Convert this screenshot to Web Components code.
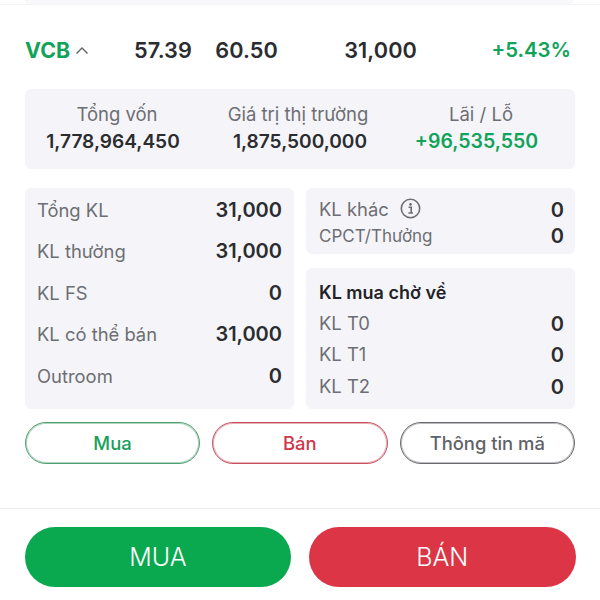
<!DOCTYPE html>
<html lang="vi"><head><meta charset="utf-8">
<style>
html,body{margin:0;padding:0;background:#fff}
body{width:600px;height:600px;overflow:hidden;font-family:Inter,"Liberation Sans",sans-serif}
</style></head><body>
<stock-panel>
  <top-edge></top-edge>
  <stock-head></stock-head>
  <sum-card></sum-card>
  <detail-grid>
    <info-card slot="left" style="--h:221px;--pad:1px 12px 0 12px;--rh:41.5px">
      <kv-row label="Tổng KL" value="31,000"></kv-row>
      <kv-row label="KL thường" value="31,000"></kv-row>
      <kv-row label="KL FS" value="0"></kv-row>
      <kv-row label="KL có thể bán" value="31,000"></kv-row>
      <kv-row label="Outroom" value="0"></kv-row>
    </info-card>
    <info-card slot="right" style="--h:66px;--pad:9px 11px 0 13px;--rh:26px">
      <kv-row label="KL khác" value="0" info style="--lm:2px"></kv-row>
      <kv-row label="CPCT/Thưởng" value="0" style="--lf:17px"></kv-row>
    </info-card>
    <info-card slot="right" style="--h:141px;--pad:9px 11px 0 13px;--rh:31.5px;--lm:2px">
      <card-title>KL mua chờ về</card-title>
      <kv-row label="KL T0" value="0"></kv-row>
      <kv-row label="KL T1" value="0"></kv-row>
      <kv-row label="KL T2" value="0"></kv-row>
    </info-card>
  </detail-grid>
  <action-row>
    <pill-btn style="--c:#17a058;--b:#4f9f70">Mua</pill-btn>
    <pill-btn style="--c:#d0374a;--b:#c9505f">Bán</pill-btn>
    <pill-btn style="--c:#5f6268;--b:#696b6f">Thông tin mã</pill-btn>
  </action-row>
  <bottom-bar>
    <big-btn style="--bg:#0aa84f">MUA</big-btn>
    <big-btn style="--bg:#dc3545">BÁN</big-btn>
  </bottom-bar>
</stock-panel>
<script>
function def(name, html, init){
  customElements.define(name, class extends HTMLElement{
    constructor(){super();this.attachShadow({mode:'open'}).innerHTML=html;}
    connectedCallback(){ if(init) init(this); }
  });
}
def('stock-panel',`<style>:host{display:flex;flex-direction:column;width:600px;height:600px}</style><slot></slot>`);
def('top-edge',`<style>:host{display:block;height:5px;box-sizing:border-box;border-bottom:1px solid #f3f3f5}
div{height:4px;margin:0 27px 0 25px;background:#f8f8fa;border-radius:0 0 6px 6px}</style><div></div>`);
def('stock-head',`<style>
:host{display:grid;grid-template-columns:100px 67px 86px 139px 154px;margin:27px 0 0 25px;height:36px;align-items:center;font-size:21.7px;font-weight:600;color:#2b2c30;line-height:36px;text-align:right;letter-spacing:.1px}
.s{display:flex;align-items:center;color:#12a35a;text-align:left;font-weight:700;font-size:21.3px}
svg{margin-left:5px}
.g{color:#12a35a;font-size:20.4px;letter-spacing:0}
</style>
<div class="s">VCB<svg width="14" height="9" viewBox="0 0 14 9"><path d="M1.5 7.5 7 2l5.5 5.5" fill="none" stroke="#5f6268" stroke-width="1.4"/></svg></div>
<div>57.39</div><div>60.50</div><div>31,000</div><div class="g">+5.43%</div>`);
def('sum-card',`<style>
:host{display:grid;grid-template-columns:176px 198px 155px;box-sizing:border-box;width:550px;height:80px;margin:21px 0 0 25px;background:#f5f5f9;border-radius:6px;padding-top:13px;text-align:center}
.l{font-size:18.5px;line-height:25px;color:#6d6e73}
.v{font-size:19.1px;line-height:29px;font-weight:600;color:#2b2c30}
.g{color:#12a35a;font-size:19.5px}
.a{padding-left:8px}.b{padding-right:4px}.c{padding-left:9px}
</style>
<div><div class="l a">Tổng vốn</div><div class="v">1,778,964,450</div></div>
<div><div class="l b">Giá trị thị trường</div><div class="v">1,875,500,000</div></div>
<div><div class="l c">Lãi / Lỗ</div><div class="v g">+96,535,550</div></div>`);
def('detail-grid',`<style>
:host{display:grid;grid-template-columns:269px 269px;column-gap:12px;margin:19px 0 0 25px}
.r{display:flex;flex-direction:column;gap:14px}
</style><div><slot name="left"></slot></div><div class="r"><slot name="right"></slot></div>`);
def('info-card',`<style>
:host{display:block;box-sizing:border-box;height:var(--h);padding:var(--pad);background:#f5f5f9;border-radius:6px}
</style><slot></slot>`);
def('card-title',`<style>:host{display:block;height:31px;font-size:18px;line-height:31px;font-weight:600;color:#222327}</style><slot></slot>`);
def('kv-row',`<style>
:host{display:flex;align-items:center;justify-content:space-between;height:var(--rh);font-size:var(--lf,18.4px)}
.l{display:flex;align-items:center;color:#6d6e73;margin-bottom:var(--lm,0)}
.v{font-size:20px;font-weight:600;color:#2b2c30}
svg{margin-left:11px;margin-bottom:2px}
</style><div class="l"><span id="l"></span></div><div class="v" id="v"></div>`, el=>{
  const r=el.shadowRoot;
  r.getElementById('l').textContent=el.getAttribute('label');
  r.getElementById('v').textContent=el.getAttribute('value');
  if(el.hasAttribute('info')&&!r.querySelector('svg')){
    r.querySelector('.l').insertAdjacentHTML('beforeend','<svg width="21" height="21" viewBox="0 0 21 21"><circle cx="10.5" cy="10.5" r="9.2" fill="none" stroke="#6d6e73" stroke-width="1.6"/><circle cx="10.5" cy="6.4" r="1.3" fill="#6d6e73"/><path d="M8.6 9.3h2.6v5.4M8.4 15h4.6" fill="none" stroke="#6d6e73" stroke-width="1.6"/></svg>');
  }
});
def('action-row',`<style>:host{display:grid;grid-template-columns:175px 175.5px 175.5px;column-gap:12px;margin:13px 0 0 25px}</style><slot></slot>`);
def('pill-btn',`<style>:host{display:flex;align-items:center;justify-content:center;box-sizing:border-box;height:42px;border:1px solid var(--b);box-shadow:inset 0 0 0 1px color-mix(in srgb,var(--b) 45%,transparent);border-radius:21px;color:var(--c);font-size:18.4px;font-weight:500}</style><slot></slot>`);
def('bottom-bar',`<style>:host{display:grid;grid-template-columns:266px 266.5px;column-gap:18px;margin-top:44px;padding:18px 0 0 25px;border-top:1px solid #efeff1}</style><slot></slot>`);
def('big-btn',`<style>:host{display:flex;align-items:center;justify-content:center;height:60px;border-radius:30px;background:var(--bg);color:#fff;font-size:25px;font-weight:300}</style><slot></slot>`);
</script>
</body></html>
